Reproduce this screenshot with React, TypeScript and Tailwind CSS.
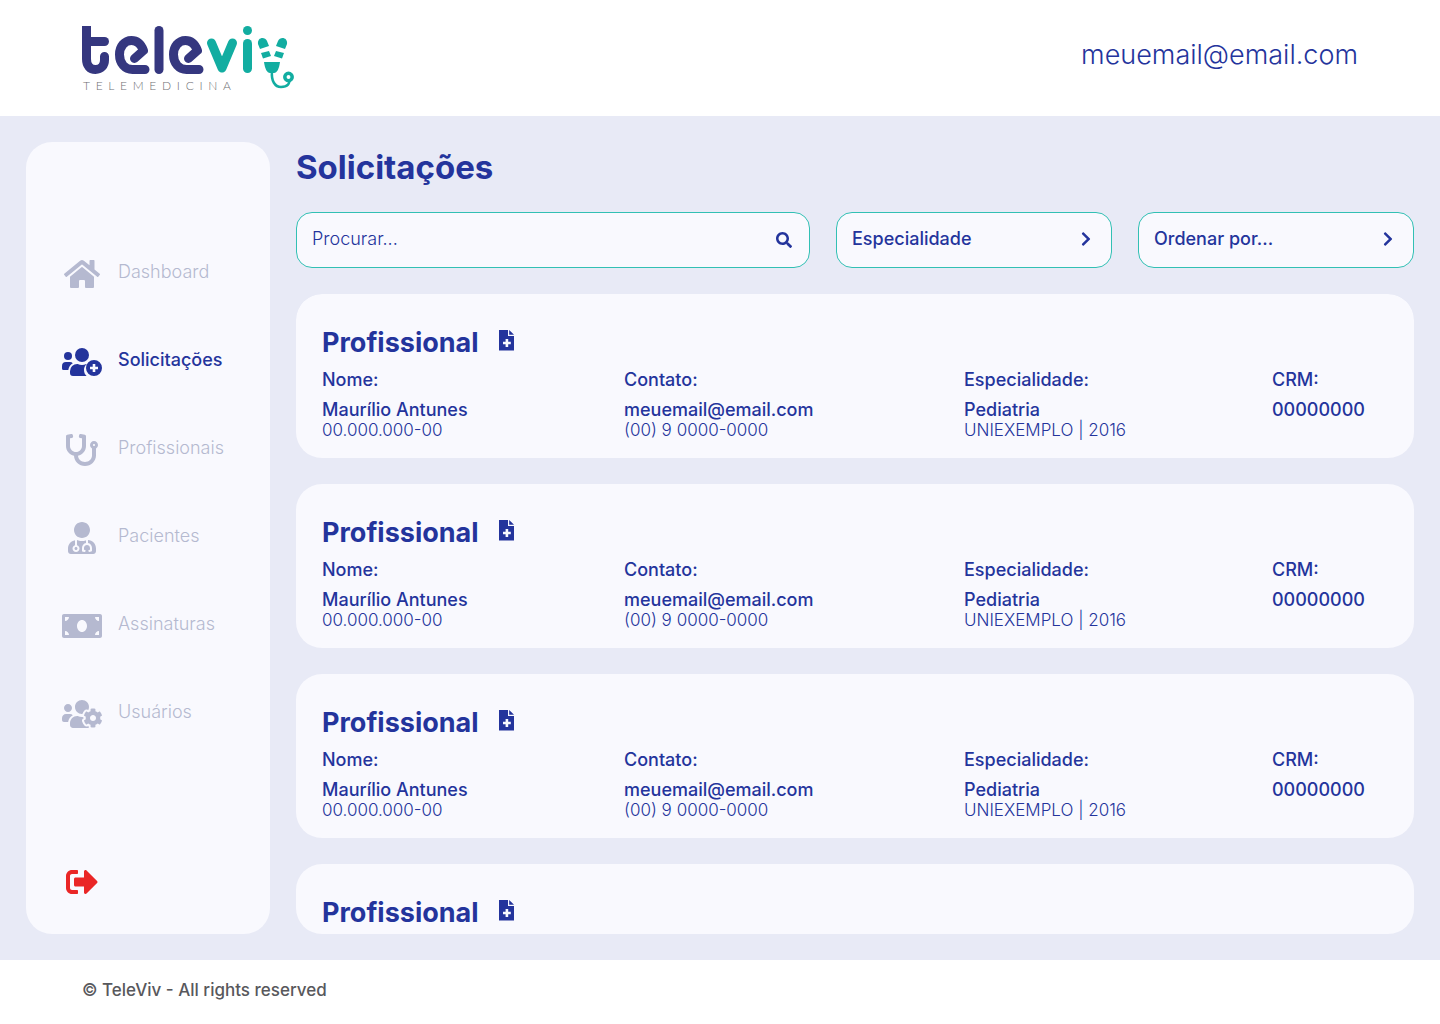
import React from 'react';
import { FaHome, FaStethoscope, FaUserMd, FaMoneyBill, FaUsersCog, FaSignOutAlt, FaSearch, FaChevronRight } from 'react-icons/fa';

function Logo() {
  return (
    <a href="#" aria-label="TeleViv Telemedicina" className="block">
      <svg width="212" height="65" viewBox="0 0 212 65" fill="none" aria-hidden="true" className="overflow-visible">
        <g stroke="#35377f" strokeWidth="9" strokeLinecap="round" strokeLinejoin="round">
          <path d="M0 0H9V11H0Z" fill="#35377f" stroke="none" />
          <path d="M4.500 5V33C4.500 39.500 8 43.500 13.500 43.500S22.500 39.500 22.500 34V30.500" />
          <path d="M4.500 15.500H22.500" />
          <path d="M52.500 32.500L61.500 24.500C59 18 54.500 14.500 49.500 14.500C42.500 14.500 37.500 20.500 37.500 28.500C37.500 37.500 43 43.500 50.500 43.500H63" />
          <path d="M77 4.500V43.500" />
          <path d="M106.500 32.500L115.500 24.500C113 18 108.500 14.500 103.500 14.500C96.500 14.500 91.500 20.500 91.500 28.500C91.500 37.500 97 43.500 104.500 43.500H117" />
        </g>
        <g stroke="#12ada1" strokeWidth="9" strokeLinecap="round" strokeLinejoin="round">
          <path d="M129.500 17L140 42L150.500 17" />
          <path d="M165.500 17.500V42.500" />
        </g>
        <g fill="#12ada1">
          <circle cx="165.500" cy="4.500" r="4.500" />
          <path d="M176 18C175 11 183 10 185 15L187 20L178 23Z" />
          <path d="M205 18C206 11 198 10 196 15L194 20L203 23Z" />
          <path d="M179 27L187 25L189 30L181 32.500Z" />
          <path d="M202 27L194 25L192 30L200 32.500Z" />
          <path d="M182 36H198C197 43 195 47 192 47H188C185 47 183 43 182 36Z" />
        </g>
        <path d="M190 45C189 55 193 61 199 61C206 61 208 57 207 54" stroke="#12ada1" strokeWidth="2.500" />
        <circle cx="206.500" cy="51" r="3.700" stroke="#12ada1" strokeWidth="3.500" />
        <text x="1" y="64" fill="#6f6f74" fontFamily="Lato" fontWeight="300" fontSize="12" letterSpacing="5.700">TELEMEDICINA</text>
      </svg>
    </a>
  );
}

function UsersPlus() {
  return (
    <svg width="40" height="32" viewBox="0 0 40 32" fill="currentColor" aria-hidden="true">
      <circle cx="6" cy="10" r="4" />
      <circle cx="20" cy="9" r="7" />
      <path d="M4 16H8C9.100 16 10.100 16.400 10.800 17.200C8.300 18.500 6.700 21 6.300 24H1.500A1.500 1.500 0 0 1 0 22.500V20A4 4 0 0 1 4 16Z" />
      <path d="M15.200 18H15.700C18.400 19.300 21.600 19.300 24.300 18H24.800C22.900 19.700 22 21.700 22 24C22 26.500 23 28.500 24.600 30H11A3 3 0 0 1 8 27V25.200A7.200 7.200 0 0 1 15.200 18Z" />
      <path fillRule="evenodd" d="M32 14A8 8 0 1 0 32 30A8 8 0 1 0 32 14ZM30.700 18H33.300V20.700H36V23.300H33.300V26H30.700V23.300H28V20.700H30.700Z" />
    </svg>
  );
}

function FilePlus() {
  return (
    <svg width="16" height="21" viewBox="0 0 16 21" fill="currentColor" aria-hidden="true">
      <path fillRule="evenodd" d="M0 0H9V6H15V20.500H0ZM6.600 9V11.700H4V14.300H6.600V17H9.200V14.300H11.800V11.700H9.200V9Z" />
      <path d="M10.200 0L15 4.800H10.200Z" />
    </svg>
  );
}

const menu = [
  { label: 'Dashboard', icon: <FaHome className="h-8 w-9" /> },
  { label: 'Solicitações', icon: <UsersPlus />, active: true },
  { label: 'Profissionais', icon: <FaStethoscope className="size-8" /> },
  { label: 'Pacientes', icon: <FaUserMd className="h-8 w-7" /> },
  { label: 'Assinaturas', icon: <FaMoneyBill className="h-8 w-10" /> },
  { label: 'Usuários', icon: <FaUsersCog className="h-8 w-10" /> },
];

function Sidebar() {
  return (
    <nav aria-label="Menu" className="flex w-[244px] shrink-0 flex-col justify-between rounded-[26px] bg-[#f9f9fe] px-9 pt-[116px] pb-9">
      <ul className="flex flex-col gap-14">
        {menu.map((item) => (
          <li key={item.label}>
            <a href="#" aria-current={item.active ? 'page' : undefined} className={item.active ? 'flex items-center gap-4 font-medium text-[#24349c]' : 'flex items-center gap-4 font-light text-[#b5b9d0]'}>
              <span className="flex w-10 shrink-0 justify-center">{item.icon}</span>
              <span className="pb-1 text-lg leading-6">{item.label}</span>
            </a>
          </li>
        ))}
      </ul>
      <button type="button" aria-label="Sair" className="ml-1 w-8 text-[#ea2626]">
        <FaSignOutAlt className="size-8" />
      </button>
    </nav>
  );
}

function FilterButton({ label }: { label: string }) {
  return (
    <button type="button" className="flex h-14 w-[276px] shrink-0 items-center justify-between rounded-2xl border border-[#32c0b4] bg-[#f9f9fe] pr-[17px] pb-0.5 pl-[15px] text-lg font-medium">
      {label}
      <FaChevronRight className="size-4" />
    </button>
  );
}

function Field({ label, value, detail }: { label: string; value: string; detail?: string }) {
  return (
    <div>
      <dt className="mb-2.5 font-medium">{label}</dt>
      <dd>
        <p className="font-medium">{value}</p>
        {detail && <p className="text-[17px] leading-5 font-light">{detail}</p>}
      </dd>
    </div>
  );
}

function RequestCard() {
  return (
    <article className="shrink-0 rounded-[26px] bg-[#f9f9fe] px-[26px] pt-[33px] pb-[18px]">
      <div className="flex items-center gap-5">
        <h2 className="text-[27px] leading-8 font-bold">Profissional</h2>
        <button type="button" aria-label="Adicionar documento" className="pb-1.5">
          <FilePlus />
        </button>
      </div>
      <dl className="mt-[11px] grid grid-cols-[302fr_340fr_308fr_116fr] text-lg leading-5 whitespace-nowrap">
        <Field label="Nome:" value="Maurílio Antunes" detail="00.000.000-00" />
        <Field label="Contato:" value="meuemail@email.com" detail="(00) 9 0000-0000" />
        <Field label="Especialidade:" value="Pediatria" detail="UNIEXEMPLO | 2016" />
        <Field label="CRM:" value="00000000" />
      </dl>
    </article>
  );
}

export default function App() {
  return (
    <div className="flex h-screen flex-col bg-[#e8eaf6] font-['Inter',sans-serif] text-[#24349c] antialiased">
      <header className="flex h-[116px] shrink-0 items-center justify-between bg-white px-[82px]">
        <Logo />
        <p className="pb-1.5 text-[27px] leading-9 font-light">meuemail@email.com</p>
      </header>
      <div className="flex min-h-0 flex-1 gap-[26px] p-[26px]">
        <Sidebar />
        <main className="flex min-w-0 flex-1 flex-col">
          <h1 className="mb-5 text-[33px] leading-[50px] font-bold">Solicitações</h1>
          <form className="flex gap-[26px]" role="search">
            <div className="flex h-14 min-w-0 flex-1 items-center rounded-2xl border border-[#32c0b4] bg-[#f9f9fe] pr-[17px] pl-[15px]">
              <input type="text" aria-label="Procurar" placeholder="Procurar..." className="min-w-0 flex-1 bg-transparent pb-0.5 text-lg font-light outline-none placeholder:text-[#24349c]" />
              <button type="submit" aria-label="Buscar">
                <FaSearch className="size-4" />
              </button>
            </div>
            <FilterButton label="Especialidade" />
            <FilterButton label="Ordenar por..." />
          </form>
          <div className="mt-[26px] flex min-h-0 flex-1 flex-col gap-[26px] overflow-y-auto rounded-[26px] [scrollbar-width:none]">
            <RequestCard />
            <RequestCard />
            <RequestCard />
            <RequestCard />
          </div>
        </main>
      </div>
      <footer className="flex h-16 shrink-0 items-center bg-white px-[82px] pb-0.5 text-[17px] font-medium text-[#58585c]">
        © TeleViv - All rights reserved
      </footer>
    </div>
  );
}
